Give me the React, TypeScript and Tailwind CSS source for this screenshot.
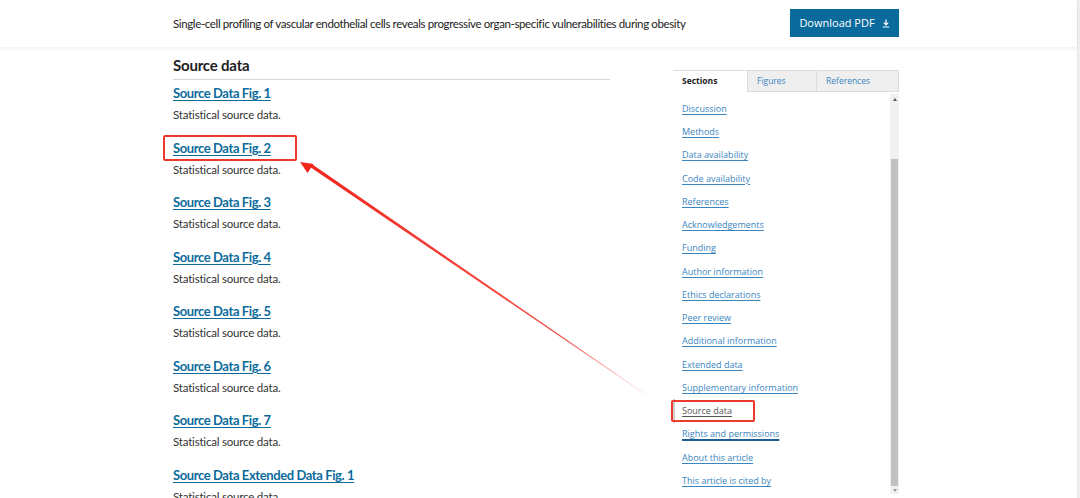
import React from "react";

const figs = [
  "Source Data Fig. 1",
  "Source Data Fig. 2",
  "Source Data Fig. 3",
  "Source Data Fig. 4",
  "Source Data Fig. 5",
  "Source Data Fig. 6",
  "Source Data Fig. 7",
  "Source Data Extended Data Fig. 1",
];

const sections = [
  "Discussion",
  "Methods",
  "Data availability",
  "Code availability",
  "References",
  "Acknowledgements",
  "Funding",
  "Author information",
  "Ethics declarations",
  "Peer review",
  "Additional information",
  "Extended data",
  "Supplementary information",
  "Source data",
  "Rights and permissions",
  "About this article",
  "This article is cited by",
];

function DownloadIcon() {
  return (
    <svg width="8" height="9" viewBox="0 0 8 9" fill="none" stroke="white" strokeWidth="1.2">
      <path d="M4 0.5v5M1.8 3.6 4 5.8l2.2-2.2M0.8 8h6.4" />
    </svg>
  );
}

function Arrow() {
  return (
    <svg className="absolute inset-0 pointer-events-none" width="1080" height="498">
      <defs>
        <linearGradient id="fade" gradientUnits="userSpaceOnUse" x1="302" y1="163" x2="650" y2="397">
          <stop offset="0" stopColor="#f2261d" stopOpacity="1" />
          <stop offset="0.75" stopColor="#f2261d" stopOpacity="0.8" />
          <stop offset="1" stopColor="#f2261d" stopOpacity="0.05" />
        </linearGradient>
      </defs>
      <polygon points="309,166.3 311,163.4 650,397 649.6,397.4" fill="url(#fade)" />
      <polygon points="300,162 313.5,164 307.5,173" fill="#f2261d" />
    </svg>
  );
}

export default function App() {
  return (
    <div className="relative w-[1080px] h-[498px] overflow-hidden bg-white flex" style={{ fontFamily: "Lato, 'Open Sans', sans-serif" }}>
      <div className="flex-1 flex flex-col">
        {/* Header */}
        <header className="h-[47px] shrink-0 bg-white shadow-[0_2px_4px_rgba(0,0,0,0.06)] relative z-10">
          <div className="w-[726px] ml-[173px] h-full flex items-center justify-between">
            <p className="text-[11.5px] text-[#222] tracking-[-0.37px] whitespace-nowrap">
              Single-cell profiling of vascular endothelial cells reveals progressive organ-specific vulnerabilities during obesity
            </p>
            <button className="h-[28px] w-[109px] shrink-0 mb-[1px] bg-[#0b6a9c] text-white text-[11px] flex items-center justify-center gap-[7px]" style={{ fontFamily: "'Open Sans', sans-serif" }}>
              Download PDF
              <DownloadIcon />
            </button>
          </div>
        </header>

        <div className="w-[726px] ml-[173px] flex gap-[63px] pt-[8px]">
          {/* Main column */}
          <main className="w-[437px]">
            <h2 className="text-[15px] font-bold text-[#222] leading-[20px] pb-[4px] border-b border-[#d5d5d5] tracking-[-0.2px]">
              Source data
            </h2>
            <div className="pt-[3px]">
              {figs.map((f, i) => (
                <div key={f} className="h-[54.57px]">
                  <div className="leading-[18px]">
                    <a className="relative inline-block text-[13px] font-bold text-[#0c6b9c] underline decoration-[#0c6b9c] underline-offset-2 tracking-[-0.4px]">
                      {f}
                      {i === 1 && (
                        <span className="absolute left-[-10px] top-[-4px] w-[134px] h-[26px] border-2 border-[#ee3a2e] rounded-[2px]" />
                      )}
                    </a>
                  </div>
                  <p className="mt-[5px] leading-[16px] text-[11.5px] text-[#333] tracking-[-0.2px]">Statistical source data.</p>
                </div>
              ))}
            </div>
          </main>

          {/* Sidebar */}
          <aside className="w-[226px] mt-[15px]" style={{ fontFamily: "'Open Sans', sans-serif" }}>
            <div className="flex h-[22px] text-[8.5px] border-t border-r border-[#dcdcdc]">
              <div className="w-[74px] bg-white font-bold text-[#222] flex items-center pl-[9px]">Sections</div>
              <div className="w-[69px] bg-[#efefef] border-l border-b border-[#dcdcdc] text-[#3b86bf] flex items-center pl-[9px]">Figures</div>
              <div className="flex-1 bg-[#efefef] border-l border-b border-[#dcdcdc] text-[#3b86bf] flex items-center pl-[9px]">References</div>
            </div>
            <div className="flex h-[400px] mt-[2px]">
              <ul className="flex-1 pt-[3px] text-[9px]">
                {sections.map((s) => {
                  const active = s === "Source data";
                  return (
                    <li key={s} className="h-[23.25px] flex items-center">
                      {active ? (
                        <div className="relative h-full flex items-center border-l-2 border-[#cfcfcf] pl-[7px]">
                          <a className="text-[#555] underline underline-offset-2">{s}</a>
                          <span className="absolute left-[-4px] top-[1px] w-[84px] h-[22px] border-2 border-[#ee3a2e] rounded-[2px]" />
                        </div>
                      ) : s === "Rights and permissions" ? (
                        <a className="pl-[9px] text-[#3b86bf] underline decoration-2 decoration-[#1d5f94] underline-offset-2">{s}</a>
                      ) : (
                        <a className="pl-[9px] text-[#3b86bf] underline underline-offset-2">{s}</a>
                      )}
                    </li>
                  );
                })}
              </ul>
              {/* scrollbar */}
              <div className="w-[9px] bg-[#f1f1f1] flex flex-col items-center">
                <div className="h-[10px] flex items-center justify-center">
                  <div className="w-0 h-0 border-l-[2.5px] border-r-[2.5px] border-b-[3px] border-l-transparent border-r-transparent border-b-[#555]" />
                </div>
                <div className="mt-[55px] w-[7px] h-[327px] bg-[#c1c1c1]" />
                <div className="flex-1 flex items-center justify-center">
                  <div className="w-0 h-0 border-l-[2.5px] border-r-[2.5px] border-t-[3px] border-l-transparent border-r-transparent border-t-[#999]" />
                </div>
              </div>
            </div>
          </aside>
        </div>
      </div>
      <div className="w-[3px] bg-[#f0f0f0] border-l border-[#e6e6e6]" />
      <Arrow />
    </div>
  );
}
